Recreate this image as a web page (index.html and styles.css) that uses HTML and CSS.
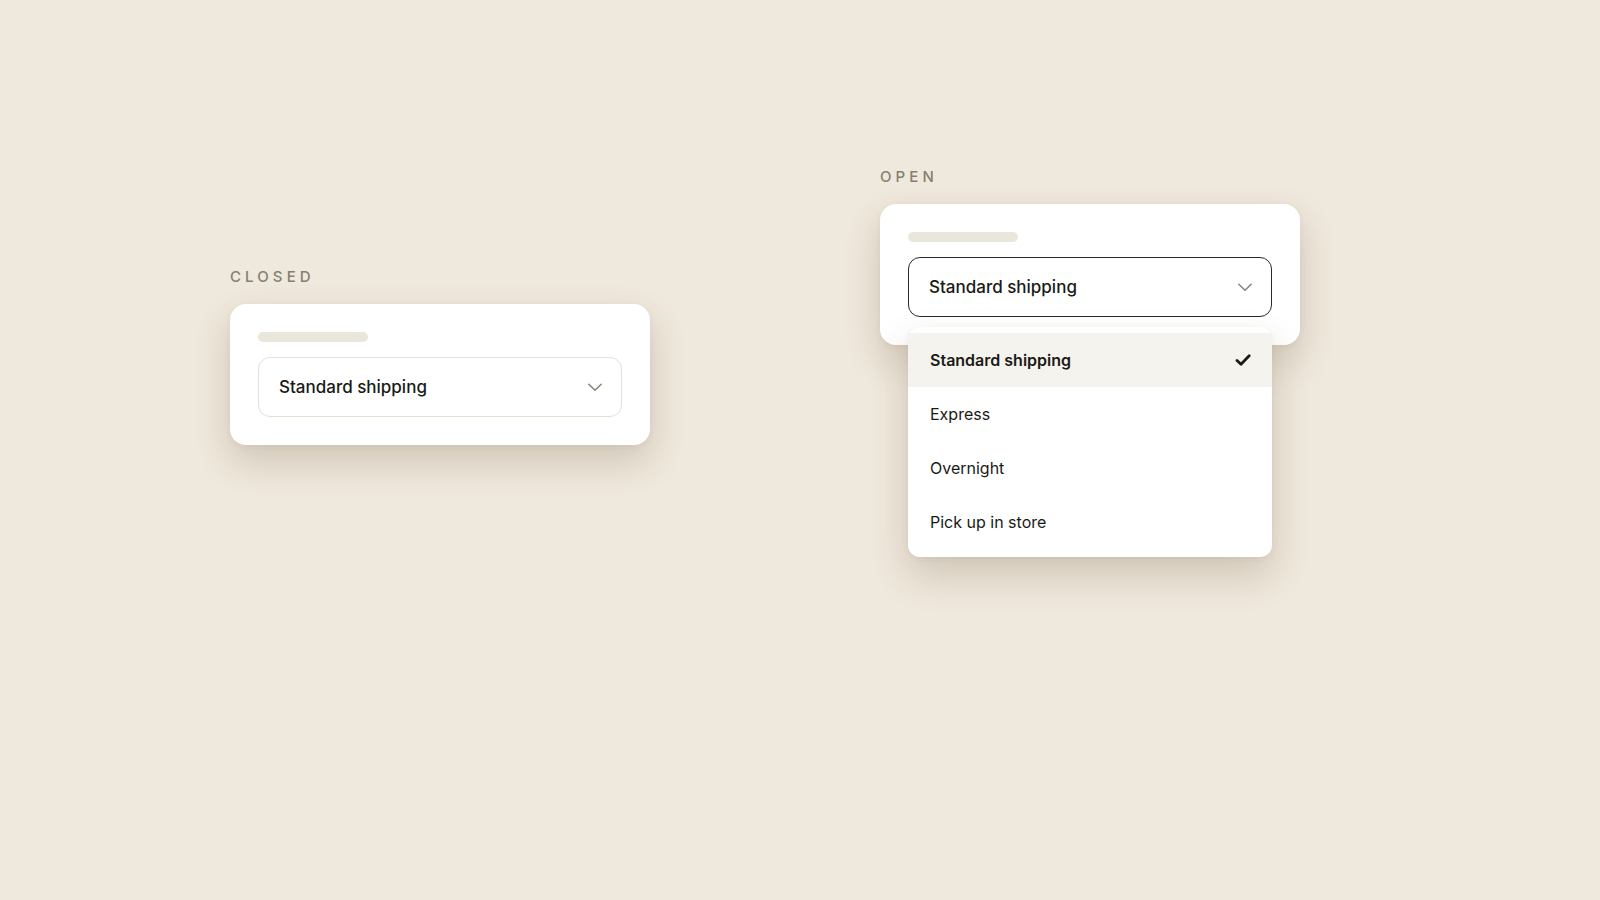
FILE: index.html
```html
<!DOCTYPE html>
<html lang="en">
<head>
    <meta charset="UTF-8">
    <meta name="viewport" content="width=device-width, initial-scale=1.0">
    <title>Select States</title>
    <link rel="stylesheet" href="styles.css">
</head>
<body>
    <div class="states">

        <!-- Closed state -->
        <div class="state state-closed">
            <div class="state-label">Closed</div>
            <div class="card">
                <div class="label-bar"></div>
                <div class="select-wrap">
                    <div class="select">
                        <span class="select-value">Standard shipping</span>
                        <svg class="chevron" width="16" height="16" viewBox="0 0 16 16" fill="none">
                            <path d="M1.8 5.2L8 11.2L14.2 5.2" stroke="#858275" stroke-width="1.5" stroke-linecap="round" stroke-linejoin="round"/>
                        </svg>
                    </div>
                </div>
            </div>
        </div>

        <!-- Open state -->
        <div class="state state-open">
            <div class="state-label">Open</div>
            <div class="card">
                <div class="label-bar"></div>
                <div class="select-wrap">
                    <div class="select is-open">
                        <span class="select-value">Standard shipping</span>
                        <svg class="chevron" width="16" height="16" viewBox="0 0 16 16" fill="none">
                            <path d="M1.8 5.2L8 11.2L14.2 5.2" stroke="#858275" stroke-width="1.5" stroke-linecap="round" stroke-linejoin="round"/>
                        </svg>
                    </div>
                    <ul class="options">
                        <li class="option is-selected">
                            <span>Standard shipping</span>
                            <svg width="16" height="16" viewBox="0 0 16 16" fill="none">
                                <path d="M2 8.4L6 12.2L14.2 3.8" stroke="#1a1a17" stroke-width="2.8" stroke-linecap="round" stroke-linejoin="round"/>
                            </svg>
                        </li>
                        <li class="option">Express</li>
                        <li class="option">Overnight</li>
                        <li class="option">Pick up in store</li>
                    </ul>
                </div>
            </div>
        </div>

    </div>
</body>
</html>
```

FILE: styles.css
```css
/* Basic Reset */
* {
    margin: 0;
    padding: 0;
    box-sizing: border-box;
}

body {
    font-family: 'Inter', 'Liberation Sans', sans-serif;
    background-color: #efe8dc;
    color: #1f1f1c;
    height: 900px;
    overflow: hidden;
}

/* Two states side by side */
.states {
    display: flex;
    align-items: flex-start;
    gap: 230px;
    padding-left: 230px;
}

.state {
    width: 420px;
}

.state-closed {
    padding-top: 267px;
}

.state-open {
    padding-top: 167px;
}

.state-label {
    font-size: 15px;
    line-height: 20px;
    font-weight: 500;
    letter-spacing: 4.1px;
    text-transform: uppercase;
    color: #858070;
    margin-bottom: 17px;
}

/* Card */
.card {
    background-color: #fff;
    border-radius: 16px;
    padding: 28px;
    box-shadow: 0 16px 36px rgba(80, 62, 30, 0.2), 0 2px 6px rgba(80, 62, 30, 0.05);
}

.label-bar {
    width: 110px;
    height: 10px;
    border-radius: 5px;
    background-color: #e9e6dc;
    margin-bottom: 15px;
}

/* Select */
.select-wrap {
    position: relative;
}

.select {
    height: 60px;
    display: flex;
    align-items: center;
    justify-content: space-between;
    padding: 0 18px 0 20px;
    border: 1px solid #e3dfd5;
    border-radius: 12px;
    background-color: #fff;
}

.select.is-open {
    border-color: #2a2925;
}

.select-value {
    font-size: 17px;
    font-weight: 500;
    color: #1a1a17;
}

/* Options list */
.options {
    list-style: none;
    position: absolute;
    top: calc(100% + 10px);
    left: 0;
    right: 0;
    background-color: #fff;
    border-radius: 12px;
    padding: 6px 0 8px;
    box-shadow: 0 18px 38px rgba(80, 62, 30, 0.2), 0 2px 6px rgba(80, 62, 30, 0.05);
    z-index: 2;
}

.option {
    height: 54px;
    display: flex;
    align-items: center;
    justify-content: space-between;
    padding: 0 21px 0 22px;
    font-size: 16px;
    color: #1a1a17;
}

.option.is-selected {
    background-color: #f5f3ee;
    font-weight: 600;
}
```
